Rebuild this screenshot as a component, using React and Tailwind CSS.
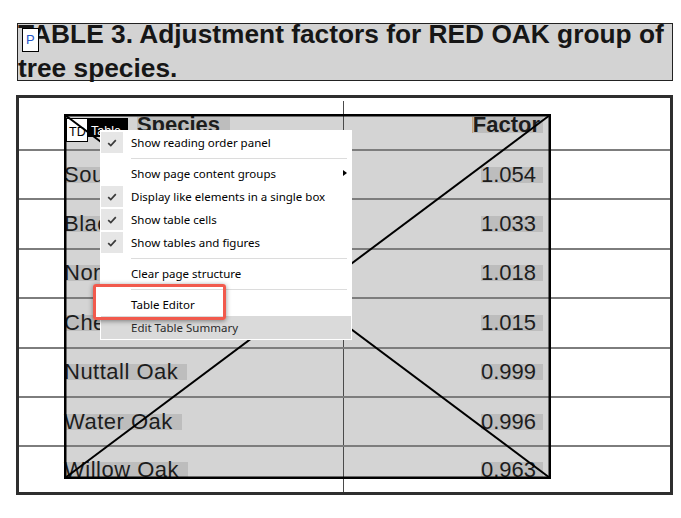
import React from "react";

const ROWS = [
  { name: "Southern Red Oak", value: "1.054" },
  { name: "Black Oak", value: "1.033" },
  { name: "Northern Red Oak", value: "1.018" },
  { name: "Cherrybark Oak", value: "1.015" },
  { name: "Nuttall Oak", value: "0.999" },
  { name: "Water Oak", value: "0.996" },
  { name: "Willow Oak", value: "0.963" },
];

const MENU = [
  { label: "Show reading order panel", checked: true },
  "sep",
  { label: "Show page content groups", sub: true },
  { label: "Display like elements in a single box", checked: true },
  { label: "Show table cells", checked: true },
  { label: "Show tables and figures", checked: true },
  "sep",
  { label: "Clear page structure" },
  "sep",
  { label: "Table Editor" },
  { label: "Edit Table Summary", hover: true },
];

const Mark = ({ children, className = "" }) => (
  <span className={`inline-block h-[16px] leading-[16px] bg-[#bdbdbd] whitespace-nowrap ${className}`}>
    {children}
  </span>
);

const Row = ({ name, value, last }) => (
  <div className={`relative flex border-t-2 border-[#7d7d7d] ${last ? "flex-1" : "h-[49.4px] shrink-0"}`}>
    <div className="w-[325px] border-r border-[#4a4a4a] flex items-center pl-[45px] overflow-hidden">
      <Mark className="pr-[9px] tracking-[0.5px]">{name}</Mark>
    </div>
    <div className="flex-1 flex items-center justify-end pr-[127px]">
      <Mark className="pr-[7px]">{value}</Mark>
    </div>
  </div>
);

const Check = () => (
  <svg width="10" height="8" viewBox="0 0 10 8" fill="none">
    <path d="M1.2 4.2 L3.8 6.6 L8.8 1.2" stroke="#3a3a3a" strokeWidth="1.7" />
  </svg>
);

const ContextMenu = () => (
  <div className="absolute left-[100px] top-[130px] w-[252px] h-[210px] bg-white p-[1px] font-['Noto_Sans',sans-serif] text-[11.5px] text-black">
    {MENU.map((item, i) =>
      item === "sep" ? (
        <div key={i} className="h-[8px] flex items-center">
          <div className="ml-[30px] mr-[4px] h-px flex-1 bg-[#dcdcdc]" />
        </div>
      ) : (
        <div
          key={i}
          className={`relative h-[23px] flex items-center ${item.hover ? "bg-[#dadada] text-[#2a2a2a]" : ""}`}
        >
          {item.checked ? (
            <div className="w-[22px] h-[21px] bg-[#e6e6e6] flex items-center justify-center">
              <Check />
            </div>
          ) : (
            <div className="w-[22px]" />
          )}
          <span className="ml-[8px] whitespace-nowrap">{item.label}</span>
          {item.sub && (
            <span className="absolute right-[4px] top-[8px] w-0 h-0 border-y-[3px] border-y-transparent border-l-[4px] border-l-black" />
          )}
        </div>
      )
    )}
  </div>
);

export default function App() {
  return (
    <div className="relative w-[681px] h-[518px] bg-white overflow-hidden font-['Liberation_Sans',Arial,sans-serif] text-[#1d1d1d]">
      <div className="ml-[17px] mt-[23px] w-[656px] h-[58px] bg-[#d3d3d3] border border-[#222]">
        <div className="mt-[-7px] text-[26.3px] leading-[34px] font-bold whitespace-nowrap text-[#161616]">
          TABLE 3. Adjustment factors for RED OAK group of
          <br />
          tree species.
        </div>
      </div>

      <div className="relative ml-[16px] mt-[14px] w-[657px] h-[400px] border-[3px] border-[#2e2e2e] flex flex-col text-[22px]">
        <div className="absolute left-[45px] top-[16px] w-[487px] h-[365px] bg-[#d4d4d4]" />

        <div className="relative flex h-[51px] shrink-0 pt-[3px] font-bold">
          <div className="w-[325px] border-r border-[#4a4a4a] flex items-center justify-center pl-[5px]">
            <Mark className="pr-[10px]">Species</Mark>
          </div>
          <div className="flex-1 flex items-center justify-end pr-[127px]">
            <Mark className="pr-[3px] border-l border-[#c9a27a]">Factor</Mark>
          </div>
        </div>
        {ROWS.map((r, i) => (
          <Row key={r.name} {...r} last={i === ROWS.length - 1} />
        ))}

        <div className="absolute left-[47px] top-[20px] flex text-[12.5px] leading-none">
          <div className="w-[22px] h-[24px] bg-white border border-black pl-[2px] pt-[7px] text-black">TD</div>
          <div className="w-[40px] h-[19px] bg-black text-white pl-[3px] pt-[7px]">Table</div>
        </div>

        <svg className="absolute left-[45px] top-[16px]" width="487" height="365" viewBox="0 0 487 365" fill="none">
          <rect x="1.25" y="1.25" width="484.5" height="362.5" stroke="#000" strokeWidth="2.5" />
          <line x1="1" y1="1" x2="486" y2="364" stroke="#000" strokeWidth="2" />
          <line x1="486" y1="1" x2="1" y2="364" stroke="#000" strokeWidth="2" />
        </svg>
      </div>

      <div className="absolute left-[22px] top-[28px] w-[17px] h-[24px] bg-white border border-black text-[13px] leading-none text-[#2456c8] pl-[3px] pt-[4px] font-['Liberation_Sans',sans-serif]">
        P
      </div>

      <ContextMenu />

      <div className="absolute left-[93px] top-[284px] w-[133px] h-[36px] border-[3px] border-[#f15a4d] rounded-[3px] shadow-[0_1px_5px_rgba(0,0,0,0.45),inset_4px_0_0_#fff]" />
    </div>
  );
}
